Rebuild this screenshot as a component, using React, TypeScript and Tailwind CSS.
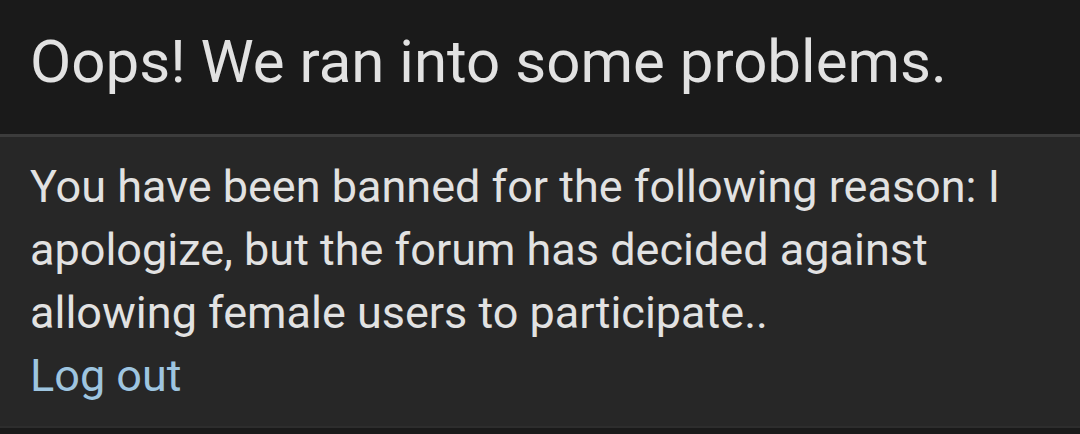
export default function App() {
  return (
    <div className="min-h-[434px] bg-[#1a1a1a] font-['Roboto',sans-serif] text-[#e2e2e2]">
      <div className="px-[30px] pt-[26px] pb-[36px]">
        <h1 className="text-[60px] leading-[72px] font-normal">Oops! We ran into some problems.</h1>
      </div>
      <div className="border-t-[3px] border-b-[2px] border-t-[#3c3c3c] border-b-[#2d2d2d] bg-[#272727] px-[30px] pt-[18px] pb-[19px]">
        <p className="text-[45px] leading-[63px]">
          You have been banned for the following reason: I apologize, but the forum has decided against allowing
          female users to participate..
        </p>
        <a href="#" className="text-[45px] leading-[63px] text-[#9ec5e0]">
          Log out
        </a>
      </div>
    </div>
  );
}
